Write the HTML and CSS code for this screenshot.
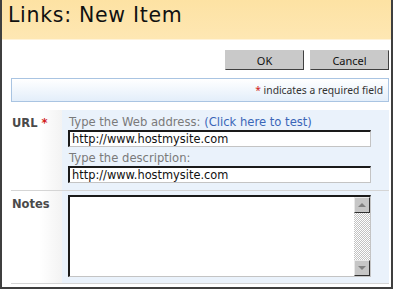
FILE: index.html
```html
<!DOCTYPE html>
<html lang="en">
<head>
  <meta charset="UTF-8">
  <title>Links: New Item</title>
  <link rel="stylesheet" href="styles.css">
</head>
<body>
  <div class="window">
    <div class="header">
      <h1>Links: New Item</h1>
    </div>

    <div class="toolbar">
      <button class="btn">OK</button>
      <button class="btn">Cancel</button>
    </div>

    <div class="required-note">
      <span class="star">*</span> indicates a required field
    </div>

    <div class="form">
      <div class="row">
        <div class="label">URL <span class="star">*</span></div>
        <div class="value">
          <div class="hint">Type the Web address: <a href="#" class="test-link">(Click here to test)</a></div>
          <div class="field">http://www.hostmysite.com</div>
          <div class="hint hint-second">Type the description:</div>
          <div class="field">http://www.hostmysite.com</div>
        </div>
      </div>
      <div class="row row-notes">
        <div class="label">Notes</div>
        <div class="value">
          <div class="notes-box">
            <div class="scrollbar">
              <div class="scroll-btn"><span class="arrow-up"></span></div>
              <div class="scroll-track"></div>
              <div class="scroll-btn"><span class="arrow-down"></span></div>
            </div>
          </div>
        </div>
      </div>
    </div>
  </div>
</body>
</html>
```

FILE: styles.css
```css
body {
  margin: 0;
  background: #fff;
  font-family: 'DejaVu Sans', Verdana, sans-serif;
}

.window {
  width: 393px;
  height: 289px;
  box-sizing: border-box;
  border-left: 2px solid #3f3f3f;
  border-right: 2px solid #3f3f3f;
  border-bottom: 2px solid #3f3f3f;
  overflow: hidden;
}

.header {
  height: 40px;
  background: linear-gradient(#fde2a3, #fee7b3);
  border-bottom: 1px solid #fff3da;
  box-sizing: border-box;
}

.header h1 {
  margin: 0;
  padding: 2px 0 0 6px;
  font-family: 'DejaVu Sans', Verdana, sans-serif;
  font-weight: normal;
  font-size: 20.5px;
  letter-spacing: 0.7px;
  line-height: 26px;
  color: #111;
}

.toolbar {
  display: flex;
  justify-content: flex-end;
  gap: 6px;
  padding: 10px 2px 0 0;
}

.btn {
  width: 79px;
  height: 20px;
  padding: 0;
  background: #c9c9c9;
  border: 1px solid #c9c9c9;
  border-right-color: #404040;
  border-bottom-color: #404040;
  font-family: 'Noto Sans', Tahoma, sans-serif;
  font-size: 11px;
  color: #111;
}

.required-note {
  margin: 8px 2px 0 9px;
  height: 24px;
  box-sizing: border-box;
  border: 1px solid #a9c4e2;
  background: linear-gradient(#ffffff, #e3eefa);
  text-align: right;
  padding: 3px 5px 0 0;
  font-family: 'Noto Sans', Tahoma, sans-serif;
  font-size: 10.3px;
  line-height: 16px;
  color: #333;
}

.star {
  color: #d21c1c;
}

.form {
  margin: 8px 2px 0 9px;
}

.row {
  display: grid;
  grid-template-columns: 51px 1fr;
  border-bottom: 1px solid #d5d5d5;
}

.label {
  padding: 6px 0 0 1px;
  background: linear-gradient(to right, #fff 55%, #f3f3f3);
  font-size: 11.5px;
  font-weight: bold;
  color: #4a4a4a;
}

.value {
  background: #eaf2fb;
  padding: 5px 0 7px 6px;
}

.hint {
  font-size: 11.6px;
  line-height: 15px;
  color: #7a7a7a;
  padding-left: 1px;
}

.hint-second {
  margin-top: 3px;
  line-height: 16px;
}

.test-link {
  color: #3a66b8;
  text-decoration: none;
}

.field {
  width: 303px;
  height: 17px;
  box-sizing: border-box;
  background: #fff;
  border: 1px solid #c4c4c4;
  border-top: 2px solid #1a1a1a;
  border-left: 2px solid #1a1a1a;
  padding: 0 0 0 2px;
  font-size: 11.4px;
  line-height: 14px;
  color: #111;
}

.row-notes .label {
  padding-top: 6px;
}

.row-notes .value {
  padding-top: 4px;
  padding-bottom: 6px;
}

.notes-box {
  width: 303px;
  height: 82px;
  box-sizing: border-box;
  background: #fff;
  border: 1px solid #c4c4c4;
  border-top: 2px solid #1a1a1a;
  border-left: 2px solid #1a1a1a;
  display: flex;
  justify-content: flex-end;
}

.scrollbar {
  width: 16px;
  display: flex;
  flex-direction: column;
}

.scroll-btn {
  height: 16px;
  box-sizing: border-box;
  background: #c6c6c6;
  border: 1px solid #e8e8e8;
  border-right-color: #303030;
  border-bottom-color: #303030;
  display: flex;
  align-items: center;
  justify-content: center;
}

.scroll-track {
  flex: 1;
  background: repeating-conic-gradient(#ffffff 0 25%, #c2c2c2 0 50%) 0 0 / 2px 2px;
}

.arrow-up {
  width: 0;
  height: 0;
  border-left: 4px solid transparent;
  border-right: 4px solid transparent;
  border-bottom: 4px solid #808080;
}

.arrow-down {
  width: 0;
  height: 0;
  border-left: 4px solid transparent;
  border-right: 4px solid transparent;
  border-top: 4px solid #808080;
}
```
